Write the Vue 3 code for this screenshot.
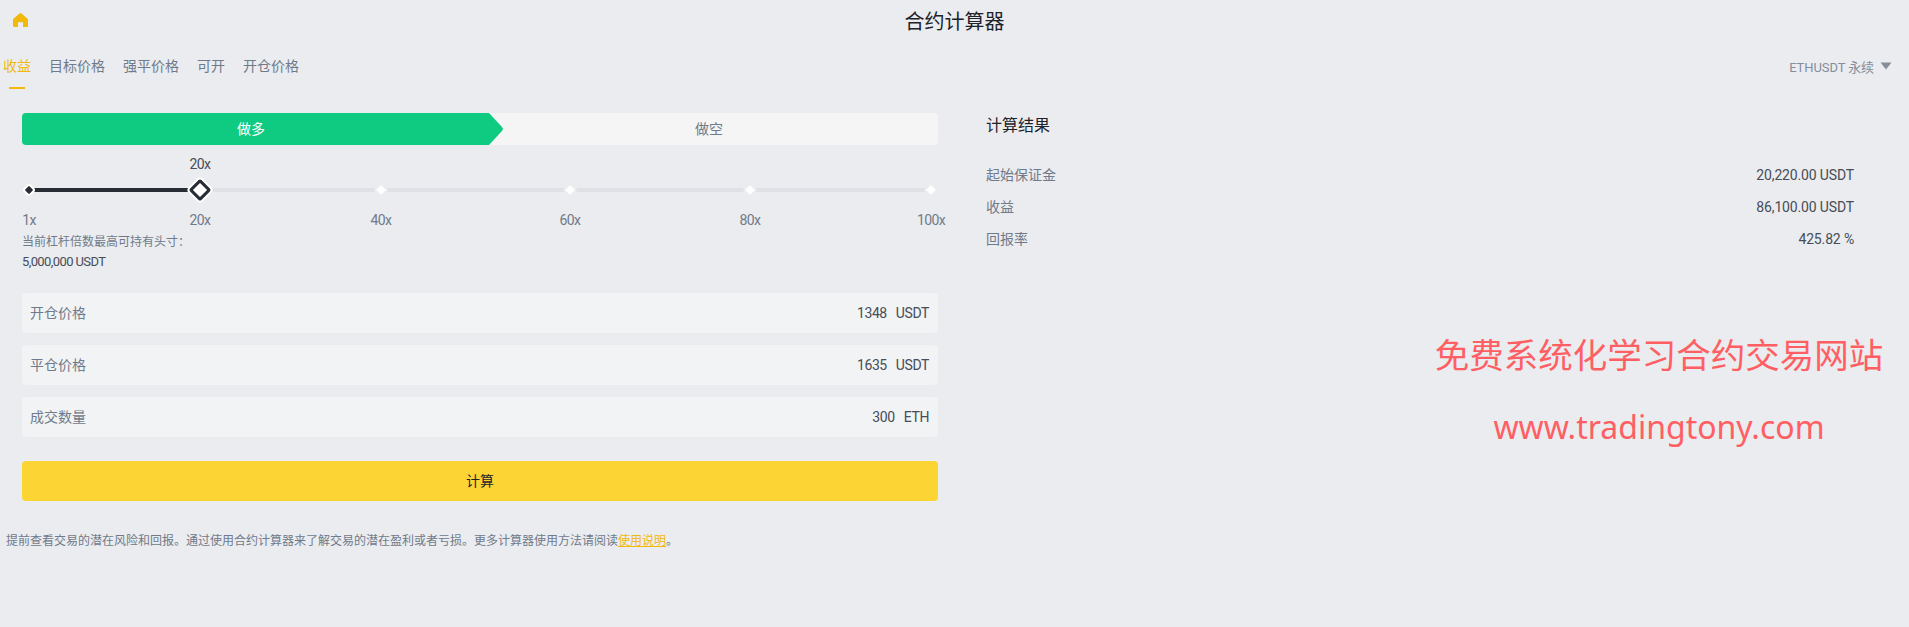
<script setup>
const tabs = ['收益', '目标价格', '强平价格', '可开', '开仓价格']
const marks = [
  { label: '1x', x: 7, kind: 'start' },
  { label: '20x', x: 178, kind: 'handle' },
  { label: '40x', x: 359, kind: 'idle' },
  { label: '60x', x: 548, kind: 'idle' },
  { label: '80x', x: 728, kind: 'idle' },
  { label: '100x', x: 909, kind: 'idle' }
]
const fields = [
  { label: '开仓价格', value: '1348', unit: 'USDT' },
  { label: '平仓价格', value: '1635', unit: 'USDT' },
  { label: '成交数量', value: '300', unit: 'ETH' }
]
const results = [
  { label: '起始保证金', value: '20,220.00 USDT' },
  { label: '收益', value: '86,100.00 USDT' },
  { label: '回报率', value: '425.82 %' }
]
</script>

<template>
  <div class="page">
    <header class="header">
      <svg class="home" viewBox="0 0 15 14" aria-hidden="true">
        <path d="M7.5 0Q8 0 8.5.5L14.6 5.8Q15 6.2 15 6.8V13Q15 14 14 14H10V9.2H5V14H1Q0 14 0 13V6.8Q0 6.2.4 5.8L6.5.5Q7 0 7.5 0Z" fill="#f0b90b" />
      </svg>
      <h1 class="title">合约计算器</h1>
    </header>

    <nav class="tabs">
      <div class="tab-list">
        <span v-for="(t, i) in tabs" :key="t" class="tab" :class="{ active: i === 0 }">{{ t }}</span>
      </div>
      <div class="symbol">
        <span>ETHUSDT 永续</span>
        <svg class="caret" viewBox="0 0 12 8" aria-hidden="true"><path d="M.5.5H11.5L6 7.5Z" fill="#848e9c" /></svg>
      </div>
    </nav>

    <main class="main">
      <section class="left">
        <div class="sides">
          <div class="side long">做多</div>
          <div class="side short">做空</div>
        </div>

        <div class="slider">
          <div class="current" style="left: 178px">20x</div>
          <div class="track"></div>
          <div class="track-fill" style="left: 7px; width: 171px"></div>
          <template v-for="m in marks" :key="m.label">
            <i class="mark" :class="m.kind" :style="{ left: m.x + 'px' }"></i>
            <span class="mark-label" :style="{ left: m.x + 'px' }">{{ m.label }}</span>
          </template>
        </div>

        <div class="limit">
          <div class="limit-label">当前杠杆倍数最高可持有头寸：</div>
          <div class="limit-value">5,000,000 USDT</div>
        </div>

        <div class="fields">
          <div v-for="f in fields" :key="f.label" class="field">
            <span class="field-label">{{ f.label }}</span>
            <span class="field-value"><span>{{ f.value }}</span><span>{{ f.unit }}</span></span>
          </div>
        </div>

        <button class="calc" type="button">计算</button>
      </section>

      <section class="right">
        <h2 class="result-title">计算结果</h2>
        <div class="result-list">
          <div v-for="r in results" :key="r.label" class="result">
            <span class="result-label">{{ r.label }}</span>
            <span class="result-value">{{ r.value }}</span>
          </div>
        </div>
      </section>
    </main>

    <p class="note">提前查看交易的潜在风险和回报。通过使用合约计算器来了解交易的潜在盈利或者亏损。更多计算器使用方法请阅读<a class="link">使用说明</a>。</p>

    <div class="watermark">
      <div class="wm-cn">免费系统化学习合约交易网站</div>
      <div class="wm-en">www.tradingtony.com</div>
    </div>
  </div>
</template>

<style>
html, body { margin: 0; background: #eaecef; }
</style>

<style scoped>
.page {
  position: relative;
  width: 1909px;
  height: 627px;
  overflow: hidden;
  background: #eaecef;
  color: #1e2329;
  font-family: Roboto, "Noto Sans CJK SC", sans-serif;
  font-size: 14px;
}
.header {
  position: relative;
  height: 44px;
  display: flex;
  align-items: center;
  justify-content: center;
}
.home { position: absolute; left: 13px; top: 13px; width: 15px; height: 14px; }
.title { margin: 0; font-size: 20px; font-weight: 400; line-height: 44px; }
.tabs {
  height: 45px;
  display: flex;
  justify-content: space-between;
  padding: 0 17px 0 3px;
}
.tab-list { display: flex; gap: 18px; }
.tab {
  position: relative;
  line-height: 44px;
  color: #707a8a;
}
.tab.active { color: #f0b90b; }
.tab.active::after {
  content: "";
  position: absolute;
  left: 6px;
  right: 6px;
  bottom: 0;
  height: 2px;
  background: #f0b90b;
}
.symbol {
  display: flex;
  align-items: center;
  gap: 6px;
  height: 44px;
  font-size: 13px;
  letter-spacing: -0.1px;
  color: #848e9c;
}
.caret { width: 12px; height: 8px; }
.main {
  display: flex;
  gap: 48px;
  padding: 24px 55px 0 22px;
}
.left { width: 916px; flex: none; }
.right { flex: 1; }
.sides {
  display: flex;
  height: 32px;
  border-radius: 4px;
  background: #f5f5f5;
}
.side {
  flex: 1;
  line-height: 32px;
  text-align: center;
  font-size: 14px;
  color: #707a8a;
}
.long {
  position: relative;
  color: #fff;
  background: #0ecb81;
  border-radius: 4px 0 0 4px;
}
.long::after {
  content: "";
  position: absolute;
  left: 100%;
  top: 0;
  width: 23px;
  height: 32px;
  background: #0ecb81;
  clip-path: polygon(0 0, 9px 0, 22px 14px, 23px 16px, 22px 18px, 9px 32px, 0 32px);
}
.slider { position: relative; height: 85px; }
.current, .mark-label {
  position: absolute;
  transform: translateX(-50%);
  font-size: 14px;
  letter-spacing: -0.6px;
  line-height: 16px;
  white-space: nowrap;
}
.current { top: 11px; color: #474d57; }
.mark-label { top: 67px; color: #707a8a; }
.track, .track-fill { position: absolute; top: 43px; height: 4px; }
.track { left: 7px; right: 7px; background: #dfe1e6; }
.track-fill { background: #272c35; }
.mark {
  position: absolute;
  top: 45px;
  box-sizing: border-box;
  transform: translate(-50%, -50%) rotate(45deg);
}
.idle {
  width: 7px;
  height: 7px;
  background: #fff;
  border-radius: 1px;
  box-shadow: 0 0 0 2px #eaecef;
}
.start {
  width: 6px;
  height: 6px;
  background: #272c35;
  border-radius: 1px;
  box-shadow: 0 0 0 2px #fff;
}
.handle {
  width: 16px;
  height: 16px;
  background: #fff;
  border: 3.5px solid #272c35;
  border-radius: 2px;
  box-shadow: 0 0 0 2px #fff;
}
.limit { font-size: 12px; line-height: 20px; margin-top: 2px; }
.limit-label { color: #707a8a; }
.limit-value { font-size: 13px; letter-spacing: -0.6px; color: #474d57; }
.fields {
  display: flex;
  flex-direction: column;
  gap: 12px;
  margin-top: 21px;
}
.field {
  display: flex;
  align-items: center;
  justify-content: space-between;
  height: 40px;
  padding: 0 9px 0 8px;
  border-radius: 4px;
  background: #f1f3f5;
}
.field-label { color: #707a8a; position: relative; top: -1px; }
.field-value { display: flex; gap: 9px; color: #474d57; letter-spacing: -0.4px; }
.calc {
  display: block;
  width: 100%;
  height: 40px;
  margin-top: 24px;
  padding: 0 0 2px;
  border: 0;
  border-radius: 4px;
  background: #fcd535;
  color: #1e2329;
  font: inherit;
}
.result-title {
  margin: 0;
  font-size: 16px;
  font-weight: 400;
  line-height: 26px;
}
.result-list { margin-top: 20px; }
.result {
  display: flex;
  justify-content: space-between;
  height: 32px;
  line-height: 32px;
}
.result-label { color: #707a8a; }
.result-value { color: #474d57; letter-spacing: -0.15px; }
.note {
  margin: 30px 0 0;
  padding-left: 6px;
  font-size: 12px;
  line-height: 20px;
  color: #707a8a;
}
.link { color: #f0b90b; text-decoration: underline; }
.watermark {
  position: absolute;
  left: 1409px;
  top: 330px;
  width: 500px;
  text-align: center;
  color: #ff5f63;
}
.wm-cn { font-size: 34.5px; line-height: 52px; }
.wm-en { font-size: 32px; line-height: 52px; margin-top: 19px; font-family: "Noto Sans", sans-serif; }
</style>
